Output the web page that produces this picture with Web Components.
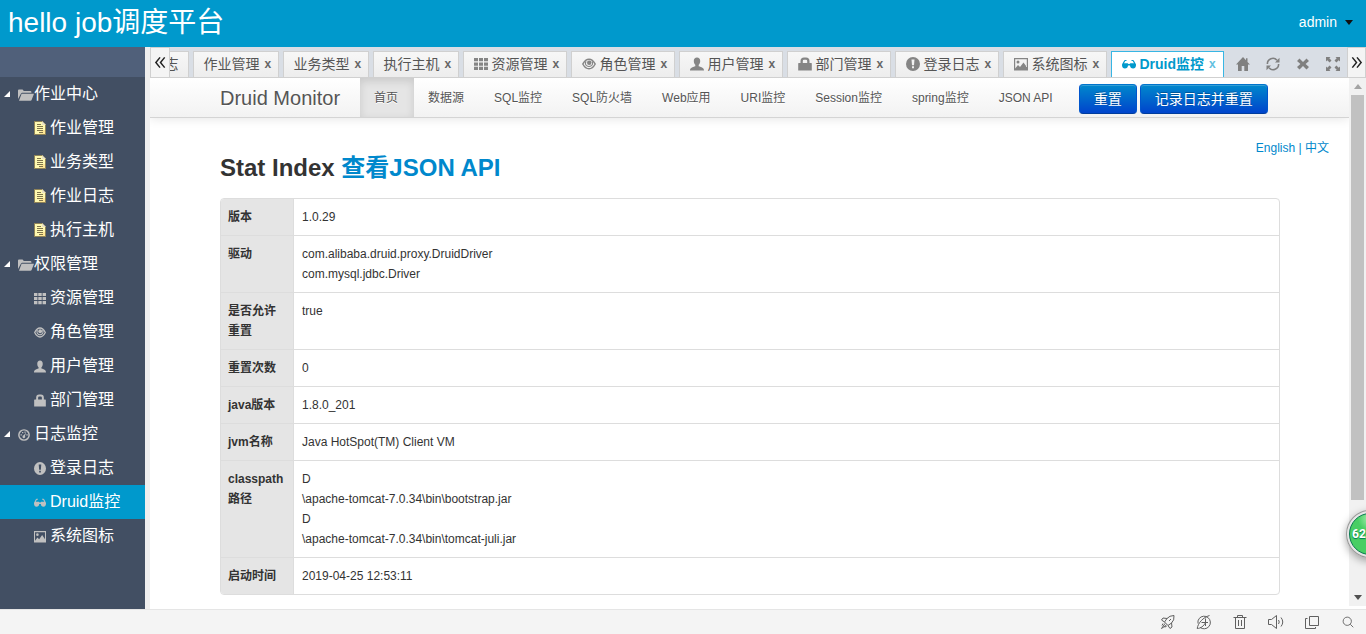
<!DOCTYPE html>
<html lang="zh-CN">
<head>
<meta charset="utf-8">
<meta name="viewport" content="width=device-width, initial-scale=1">
<title>hello job调度平台</title>
<style>
  html, body { margin: 0; height: 100%; }
  body { font-family: "Liberation Sans", "Noto Sans CJK SC", sans-serif; font-size: 14px; overflow: hidden; background: #efefef; }
</style>
</head>
<body>
<job-app></job-app>
<script>
const define = (name, render) => customElements.define(name, class extends HTMLElement {
  connectedCallback() {
    if (this.shadowRoot) return;
    const tpl = document.createElement('template');
    tpl.innerHTML = render(this);
    this.attachShadow({ mode: 'open' }).append(tpl.content.cloneNode(true));
  }
});

const ICONS = {
  folder: ['0 0 16 12', '<path d="M0 10V1.5Q0 .5 1 .5h3.600l1.200 1.600h6.600q1 0 1 1v.7H4L3 4.500z"/><path d="M3.600 4.800H16l-2.300 6q-.3.900-1.300.900H1z"/>'],
  note: ['0 0 12 14', '<path fill="#8f8358" d="M0 0h8.500L12 3.500V14H0z"/><path fill="#fff9b0" d="M1 1h7v3h3v9H1z"/><path fill="#ffe08a" d="M8 9h3v4H5z" opacity=".7"/><path fill="none" stroke="#80754c" d="M3 3.500h4M3 5.500h6M3 7.500h6M3 9.500h6M5 11.500h4"/><path fill="#e9e2c6" d="M8 0v4h4z"/>'],
  grid: ['0 0 14 14', '<path d="M0 1h4v3.300H0zm5 0h4v3.300H5zm5 0h4v3.300h-4zM0 5.400h4v3.300H0zm5 0h4v3.300H5zm5 0h4v3.300h-4zM0 9.800h4v3.300H0zm5 0h4v3.300H5zm5 0h4v3.300h-4z"/>'],
  eye: ['0 0 14 14', '<path fill="none" stroke="currentColor" stroke-width="1.500" d="M.8 7Q3.400 2.200 7 2.200T13.200 7Q10.600 11.800 7 11.800T.8 7z"/><path fill="none" stroke="currentColor" stroke-width="1.100" d="M4 4.200Q2.600 6.800 4.600 8.600q2.400 1.800 4.800 0 2-1.800.6-4.400"/><circle cx="7.200" cy="5.700" r="2.200"/>'],
  user: ['0 0 14 14', '<path d="M7 .5c2 0 3.300 1.400 3.200 3.500 0 2-.7 3-1.500 3.800v1.400c2.800 1 5.300 1.300 5.300 4.300H0c0-3 2.500-3.300 5.300-4.300V7.800C4.500 7 3.800 6 3.800 4 3.700 1.900 5 .5 7 .5z"/>'],
  lock: ['0 0 14 14', '<path fill-rule="evenodd" d="M.2 6.500Q.2 6 .7 6h1.800V4a3.500 3.500 0 0 1 3.500-3.500h2a3.500 3.500 0 0 1 3.500 3.500V6h1.800q.5 0 .5.500V13.500H.2zM4.800 6h4.400V4q0-1.300-1.200-1.300H6q-1.200 0-1.200 1.300z"/>'],
  alert: ['0 0 14 14', '<path fill-rule="evenodd" d="M7 0a7 7 0 1 1 0 14A7 7 0 0 1 7 0zM5.500 2.600 6 8.300h2l.5-5.700zM6 9.300v2h2v-2z"/>'],
  glasses: ['0 0 14 14', '<path d="M3 3h1.500v1H3.300L2 6.200h3.600l.9.900h1l.9-.9H12L10.700 4H9.500V3H11q.5 0 .8.500l2 3.500q.3.600.2 1.300-.3 3.200-2.900 3.200-2.900 0-3.100-3h-2q-.2 3-3.100 3Q.3 11.500 0 8.300 0 7.600.2 7l2-3.500Q2.500 3 3 3z"/>'],
  image: ['0 0 14 14', '<path fill-rule="evenodd" d="M0 1h14v12.500H0zm1.200 1.300v9.200L4 8l2 2 3.500-4.500L12.800 10V2.300z"/><circle cx="4" cy="5" r="1.500"/>'],
  dash: ['0 0 14 14', '<circle cx="7" cy="7" r="6" fill="none" stroke="currentColor" stroke-width="1.700"/><path d="M3 6h1.500v1.500H3zm1.700-2.400h1.500V5H4.700zM7.500 3H9v1.500H7.500zM9.800 6h1.500v1.500H9.800z"/><path d="m9.700 4-1.600 4a1.600 1.600 0 1 1-1.500-.6z"/>'],
  home: ['0 0 14 14', '<path d="M7 0 0 7.500h2V14h3.700V9h2.600v5H12V7.500h2L11.500 5V1.200H10v2z"/>'],
  refresh: ['0 0 14 14', '<path fill="none" stroke="currentColor" stroke-width="1.600" d="M1.400 7A5.500 5.500 0 0 1 11 3.200M12.600 7A5.500 5.500 0 0 1 3 10.800"/><path d="M13.500.8v4.600H9zM.5 13.200V8.600H5z"/>'],
  close: ['0 0 14 14', '<path d="m3.500 1.500 3.500 3.400 3.500-3.400 2.500 2.400L9.600 7l3.400 3.100-2.500 2.400L7 9.100l-3.500 3.400L1 10.100 4.400 7 1 3.900z"/>'],
  full: ['0 0 14 14', '<path d="M0 0h4.500L3.300 1.300 5.500 3.600 3.600 5.500 1.300 3.300 0 4.500zm14 0v4.500l-1.300-1.200-2.300 2.200-1.900-1.900 2.200-2.300L9.500 0zM0 14V9.500l1.300 1.200 2.300-2.200 1.900 1.900-2.200 2.300L4.500 14zm14 0H9.500l1.200-1.300-2.200-2.300 1.900-1.900 2.300 2.200L14 9.500z"/>'],
  left: ['0 0 14 14', '<path fill="none" stroke="currentColor" stroke-width="1.600" d="M6.500 1.500 2 7l4.500 5.500M11.500 1.500 7 7l4.500 5.500"/>'],
  right: ['0 0 14 14', '<path fill="none" stroke="currentColor" stroke-width="1.600" d="M2.500 1.500 7 7l-4.500 5.500M7.500 1.500 12 7l-4.500 5.500"/>'],
  rocket: ['0 0 16 16', '<g fill="none" stroke="currentColor"><path d="M14 1.500Q9.500 1.500 7 4.500L4.500 8 8 11.500 11.500 9Q14.500 6.500 14 1.500zM7 4.500 3 4 1.500 6 4.500 8M11.500 9l.5 4-2 1.500L8 11.500M5 9.500 1.500 14.500 6.500 11M3 9.500l-1 2M4.500 13l2-.5"/><path d="m9 7 2-2"/></g>'],
  speed: ['0 0 16 16', '<g fill="none" stroke="currentColor"><path d="M4 13.300A6.300 6.300 0 1 0 3.200 4.500 6 6 0 0 0 2 9.500M1.200 14.500C2 9 7 3.500 13.500 1.500M1.200 14.500C4.500 14.500 8 12 9.500 8.500M5.500 8.500h6.500M9.500 4.500v7.500"/></g>'],
  trash: ['0 0 16 16', '<path fill="none" stroke="currentColor" d="M1.500 3.500h13M5.500 3.500v-2h5v2M3.500 3.500v11h9v-11M6.500 6v6M9.500 6v6"/>'],
  sound: ['0 0 16 16', '<path fill="none" stroke="currentColor" d="M.5 5.500h3l5-4v13l-5-4h-3zM10.500 6q1.500 2 0 4M13 3.500q3.500 4.500 0 9"/>'],
  windows: ['0 0 16 16', '<path fill="none" stroke="currentColor" d="M5.500 2.500h9v9h-9zM3.500 4.500h-2v10h10v-1.500"/>'],
  search: ['0 0 16 16', '<g fill="none" stroke="currentColor" stroke-width="1.200"><circle cx="7" cy="7" r="5.500"/><path d="m11 11 4 4"/></g>']
};

define('ui-icon', el => {
  const [box, body] = ICONS[el.getAttribute('name')];
  return `<style>:host{display:block;flex:none;width:14px;height:14px}svg{display:block;width:100%;height:100%}</style>
  <svg viewBox="${box}" preserveAspectRatio="none" fill="currentColor" aria-hidden="true">${body}</svg>`;
});

define('app-header', () => `<style>
  :host{display:flex;justify-content:space-between;align-items:center;flex:none;height:46px;padding:0 13px 1px 8px;background:#0099cc;color:#fff}
  h1{margin:0;font-size:28px;line-height:44px;font-weight:400}
  button{display:flex;align-items:center;gap:8px;border:0;padding:0 0 2px;background:none;color:#fff;font-family:inherit;font-size:14px;line-height:20px}
  i{border:4px solid transparent;border-top:5px solid #111;border-bottom:0}
</style><h1>hello job调度平台</h1><button type="button">admin<i></i></button>`);

define('nav-entry', el => `<style>
  :host{display:block}
  a{display:flex;align-items:center;height:34px;box-sizing:border-box;color:#fff;text-decoration:none;font-size:16px;line-height:24px;white-space:nowrap}
  :host([kind=group]) a{padding-left:4px}
  :host([kind=leaf]) a{padding-left:34px;gap:4px}
  :host([selected]) a{background:#0099cc}
  ui-icon{width:12px;height:13px;color:#c0c0c0;margin-top:1px}
  :host([kind=group]) ui-icon{width:16px;height:12px;margin-left:8px}
  :host([icon=dash]) ui-icon{width:12px;margin-right:4px}
  ui-icon[name=note]{height:14px;margin-top:0}
  i{border:3px solid transparent;border-right-color:#fff;border-bottom-color:#fff}
</style><a href="#">${el.getAttribute('kind') === 'group' ? '<i></i>' : ''}<ui-icon name="${el.getAttribute('icon')}"></ui-icon><span><slot></slot></span></a>`);

const MENU = [
  ['group','folder','作业中心'],['leaf','note','作业管理'],['leaf','note','业务类型'],['leaf','note','作业日志'],['leaf','note','执行主机'],
  ['group','folder','权限管理'],['leaf','grid','资源管理'],['leaf','eye','角色管理'],['leaf','user','用户管理'],['leaf','lock','部门管理'],
  ['group','dash','日志监控'],['leaf','alert','登录日志'],['leaf','glasses','Druid监控',' selected'],['leaf','image','系统图标']
];
define('side-menu', () => `<style>
  :host{display:block;flex:none;width:145px;background:#424f63;overflow:hidden}
  .cap{height:30px;background:#50607a}
</style><div class="cap"></div><nav>${MENU.map(([k, i, t, s = '']) => `<nav-entry kind="${k}" icon="${i}"${s}>${t}</nav-entry>`).join('')}</nav>`);

define('page-tab', el => `<style>
  :host{display:flex;align-items:center;box-sizing:border-box;flex:none;height:26px;border:1px solid #d0d0d0;border-bottom:0;padding:0 8px 2px 9px;background:linear-gradient(#f7f7f7,#ededed);color:#555;white-space:nowrap}
  :host([pinned]){padding-right:10px}
  :host([selected]){border-color:#38b6e4;background:#fff;color:#0099cc;font-weight:700;margin-right:3px}
  a{display:flex;align-items:center;gap:3px;color:inherit;text-decoration:none;font-size:14px;line-height:20px}
  ui-icon{margin-left:1px;color:#858585}
  :host([selected]) ui-icon{color:#0099cc}
  button{border:0;padding:0;margin-left:5px;width:6px;background:none;color:#666;font:700 12px/20px "Liberation Sans",sans-serif}
  :host([selected]) button{color:#62c0df}
</style><a href="#">${el.getAttribute('icon') ? `<ui-icon name="${el.getAttribute('icon')}"></ui-icon>` : ''}<span><slot></slot></span></a>${el.hasAttribute('pinned') ? '' : '<button type="button" aria-label="关闭">x</button>'}`);

const TABS = [['','志',' pinned'],['','作业管理'],['','业务类型'],['','执行主机'],['grid','资源管理'],['eye','角色管理'],['user','用户管理'],['lock','部门管理'],['alert','登录日志'],['image','系统图标'],['glasses','Druid监控',' selected']];
define('tab-strip', () => `<style>
  :host{display:flex;flex:none;height:30px;border-bottom:1px solid #d0d0d0;background:#d9dee5}
  .tabs{flex:1;min-width:0;display:flex;align-items:flex-end;justify-content:flex-end;gap:4px;overflow:hidden}
  button{flex:none;border:0;padding:0;background:none;display:flex;align-items:center;justify-content:center;color:#808080}
  .tool{width:30px;padding:3px 0 0 2px}
  .edge{width:20px;background:#f4f4f4;border:solid #d0d0d0;border-width:1px 1px 0;color:#222}
  .edge:last-child{width:19px}
  .edge ui-icon{width:13px;height:13px}
</style><button class="edge" type="button" aria-label="向左"><ui-icon name="left"></ui-icon></button>
<div class="tabs">${TABS.map(([i, t, s = '']) => `<page-tab icon="${i}"${s}>${t}</page-tab>`).join('')}</div>
${[['home','首页'],['refresh','刷新'],['close','关闭'],['full','全屏']].map(([i, l]) => `<button class="tool" type="button" aria-label="${l}"><ui-icon name="${i}"></ui-icon></button>`).join('')}
<button class="edge" type="button" aria-label="向右"><ui-icon name="right"></ui-icon></button>`);

define('druid-nav', () => `<style>
  :host{display:flex;flex:none;padding:0 69px 0 70px;height:39px;background:linear-gradient(#fff,#f2f2f2);border-bottom:1px solid #d4d4d4;box-shadow:0 1px 10px rgba(0,0,0,.1);white-space:nowrap}
  a{color:#555;text-decoration:none;text-shadow:0 1px 0 #fff}
  .brand{padding:2px 20px 0 0;font-size:20px;line-height:37px}
  nav{display:flex;margin-right:10px}
  nav a{padding:2px 16px 0 14px;font-size:12px;line-height:37px}
  nav a.on{background:#e5e5e5;box-shadow:inset 0 3px 8px rgba(0,0,0,.125)}
  .acts{display:flex;gap:3px;align-items:center;padding-top:3px}
  button{height:30px;padding:0 14px;border:1px solid;border-color:#0074cc #0055cc #003c9c;border-radius:4px;background:linear-gradient(#0088cc,#0044cc);box-shadow:inset 0 1px 0 rgba(255,255,255,.2);color:#fff;font-family:inherit;font-size:14px;line-height:20px;text-shadow:0 -1px 0 rgba(0,0,0,.25)}
</style><a class="brand" href="#">Druid Monitor</a>
<nav>${['首页','数据源','SQL监控','SQL防火墙','Web应用','URI监控','Session监控','spring监控','JSON API'].map((t, i) => `<a href="#"${i ? '' : ' class="on"'}>${t}</a>`).join('')}</nav>
<div class="acts"><button type="button">重置</button><button type="button">记录日志并重置</button></div>`);

const STATS = [['版本','1.0.29'],['驱动','com.alibaba.druid.proxy.DruidDriver<br>com.mysql.jdbc.Driver'],['是否允许重置','true'],['重置次数','0'],['java版本','1.8.0_201'],['jvm名称','Java HotSpot(TM) Client VM'],['classpath路径','D<br>\\apache-tomcat-7.0.34\\bin\\bootstrap.jar<br>D<br>\\apache-tomcat-7.0.34\\bin\\tomcat-juli.jar'],['启动时间','2019-04-25 12:53:11']];
define('stat-table', () => `<style>
  :host{display:block}
  table{width:100%;border:1px solid #ddd;border-radius:4px;border-spacing:0;font-size:12px;line-height:20px;color:#333;overflow:hidden}
  th,td{padding:8px;text-align:left;vertical-align:top;border-top:1px solid #ddd}
  tr:first-child>*{border-top:0}
  th{box-sizing:border-box;width:72px;background:#e5e5e5;overflow-wrap:anywhere;padding:8px 7px}
  td{border-left:1px solid #ddd}
</style><table><tbody>${STATS.map(([k, v]) => `<tr><th scope="row">${k}</th><td>${v}</td></tr>`).join('')}</tbody></table>`);

define('druid-page', () => `<style>
  :host{display:flex;flex-direction:column;flex:1;min-width:0;background:#fff}
  .lang{padding:20px 20px 0 0;height:0;text-align:right;font-size:12px;line-height:20px;color:#0088cc}
  a{color:#0088cc;text-decoration:none}
  main{padding:10px 69px 14px 70px}
  h2{margin:0 0 10px;font-size:24px;line-height:40px;color:#333}
</style><druid-nav></druid-nav>
<div class="lang"><a href="#">English</a> | <a href="#">中文</a></div>
<main><h2>Stat Index <a href="#">查看JSON API</a></h2><stat-table></stat-table></main>`);

define('scroll-rail', () => `<style>
  :host{display:flex;flex-direction:column;align-items:center;flex:none;width:17px;margin-bottom:3px;background:#f1f1f1}
  i{flex:none;border:4px solid transparent}
  .up{border-top:0;border-bottom:5px solid #a3a3a3;margin:6px 0}
  .down{border-bottom:0;border-top:5px solid #505050;margin:6px 0}
  .track{flex:1;width:13px}
  .thumb{height:82%;background:#c1c1c1}
</style><i class="up"></i><div class="track"><div class="thumb"></div></div><i class="down"></i>`);

define('status-bar', () => `<style>
  :host{display:flex;flex:none;justify-content:flex-end;gap:20px;height:24px;border-top:1px solid #e5e5e5;padding-right:10px;background:#f4f4f4;color:#606060}
  button{display:flex;align-items:center;border:0;padding:0;background:none;color:inherit}
  ui-icon{width:16px;height:16px}
  button:last-child ui-icon{width:12px;height:12px;margin:0 2px}
</style>${[['rocket','加速'],['speed','极速'],['trash','清理'],['sound','声音'],['windows','窗口'],['search','搜索']].map(([i, l]) => `<button type="button" aria-label="${l}"><ui-icon name="${i}"></ui-icon></button>`).join('')}`);

define('speed-ball', () => `<style>
  :host{display:block;position:absolute;right:-28px;bottom:76px;width:48px;height:48px;border-radius:50%;background:#e6e6e6;box-shadow:0 0 0 1px #999 inset,0 3px 8px rgba(0,0,0,.35)}
  div{margin:3px;box-sizing:border-box;width:42px;height:42px;border-radius:50%;border:1px solid #087a50;background:radial-gradient(circle at 50% 12%,#a8eeb0 0,#48ce64 30%,#48ce64 100%);color:#fff;font:700 12px/40px Roboto,"Liberation Sans",sans-serif;padding-left:2px;text-shadow:0 1px 1px #075}
</style><div>62</div>`);

define('job-app', () => `<style>
  :host{display:flex;flex-direction:column;height:100vh;position:relative;overflow:hidden}
  .body{flex:1;min-height:0;display:flex;gap:5px}
  .work{flex:1;min-width:0;display:flex;flex-direction:column}
  .frame{flex:1;min-height:0;display:flex;background:#fff;overflow:hidden}
</style><app-header></app-header>
<div class="body"><side-menu></side-menu><section class="work"><tab-strip></tab-strip><div class="frame"><druid-page></druid-page><scroll-rail></scroll-rail></div></section></div>
<status-bar></status-bar><speed-ball></speed-ball>`);
</script>
</body>
</html>
